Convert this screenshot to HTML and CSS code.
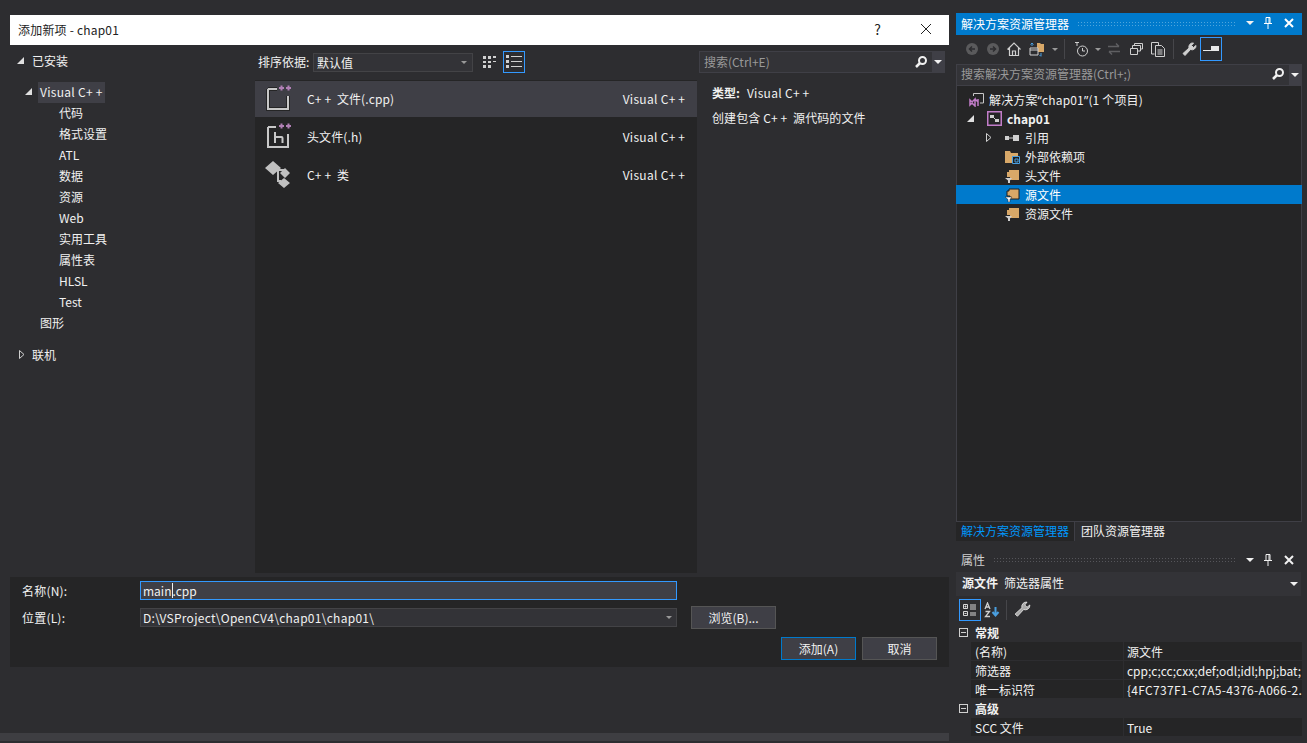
FILE: index.html
```html
<!DOCTYPE html>
<html lang="zh-CN">
<head>
    <meta charset="UTF-8">
    <title>添加新项 - chap01</title>
    <link rel="stylesheet" href="styles.css">
</head>
<body>
<div class="app">
    <div class="workspace">
        <div class="dialog">
            <div class="dialog-title">
                <span class="dialog-name">添加新项 - chap01</span>
                <span class="dialog-help">?</span>
                <svg class="dialog-close" width="12" height="12" viewBox="0 0 12 12"><path d="M1 1l10 10M11 1L1 11" stroke="#222" fill="none"/></svg>
            </div>
            <div class="dialog-body">
                <div class="cats">
                    <div class="cat cat-top"><i class="tri tri-a"></i>已安装</div>
                    <div class="cat cat-gap"><i class="tri tri-b"></i><span class="cat-sel">Visual C<span class="pp">++</span></span></div>
                    <div class="cat cat-sub">代码</div>
                    <div class="cat cat-sub">格式设置</div>
                    <div class="cat cat-sub">ATL</div>
                    <div class="cat cat-sub">数据</div>
                    <div class="cat cat-sub">资源</div>
                    <div class="cat cat-sub">Web</div>
                    <div class="cat cat-sub">实用工具</div>
                    <div class="cat cat-sub">属性表</div>
                    <div class="cat cat-sub">HLSL</div>
                    <div class="cat cat-sub">Test</div>
                    <div class="cat cat-mid">图形</div>
                    <div class="cat cat-top cat-online">
                        <svg class="tri-open" width="6" height="9" viewBox="0 0 6 9"><path d="M.5.5v8L5 4.500z" fill="none" stroke="#d0d0d0"/></svg>联机
                    </div>
                </div>
                <div class="center">
                    <div class="sortbar">
                        <span class="sort-label">排序依据:</span>
                        <div class="sort-select">默认值<i class="caret"></i></div>
                        <svg class="view-icon" width="14" height="14" viewBox="0 0 14 14" fill="#d0d0d0"><path d="M0 1h3v3H0zM5 1h3v3H5zM10 1h3v2h-3zM0 6h3v2H0zM5 6h3v2H5zM10 6h3v1h-3zM0 10h3v3H0zM5 10h3v3H5z"/></svg>
                        <div class="view-active">
                            <svg width="16" height="14" viewBox="0 0 16 14" fill="#d0d0d0"><path d="M0 0h3v3H0zM0 5h3v3H0zM0 10h3v3H0zM5 1h11v1H5zM5 6h11v1H5zM5 11h11v1H5z"/></svg>
                        </div>
                    </div>
                    <div class="templates">
                        <div class="tpl tpl-sel">
                            <svg class="tpl-icon" width="28" height="30" viewBox="0 0 28 30"><path d="M3 6h9M3 6v20h20V13" fill="none" stroke="#252526" stroke-width="4"/><path d="M3 6h9M3 6v20h20V13" fill="none" stroke="#c8c8c8" stroke-width="2"/><path d="M14 5h5M16.500 2.500v5M21 5h5M23.500 2.500v5" stroke="#b180b5" stroke-width="2"/></svg>
                            <span class="tpl-name">C<span class="pp">++</span> 文件(.cpp)</span><span class="tpl-lang">Visual C<span class="pp">++</span></span>
                        </div>
                        <div class="tpl">
                            <svg class="tpl-icon" width="28" height="30" viewBox="0 0 28 30"><path d="M3 6h8M3 6v20h20V13" fill="none" stroke="#c8c8c8" stroke-width="2"/><path d="M10 11v11M10 16h6.500a1 1 0 0 1 1 1v5" fill="none" stroke="#c8c8c8" stroke-width="2"/><path d="M14 5h5M16.500 2.500v5M21 5h5M23.500 2.500v5" stroke="#b180b5" stroke-width="2"/></svg>
                            <span class="tpl-name">头文件(.h)</span><span class="tpl-lang">Visual C<span class="pp">++</span></span>
                        </div>
                        <div class="tpl">
                            <svg class="tpl-icon" width="28" height="30" viewBox="0 0 28 30" fill="#c0c0c0"><path d="M8 2l8 7-8 7-8-7zM20 9l5 5-5 5-5-5zM19 19l6 5-6 5-6-5z"/><path d="M12 11h7M13 11v11h3" fill="none" stroke="#c0c0c0" stroke-width="2"/></svg>
                            <span class="tpl-name">C<span class="pp">++</span> 类</span><span class="tpl-lang">Visual C<span class="pp">++</span></span>
                        </div>
                    </div>
                </div>
                <div class="info">
                    <div class="search info-search">
                        <span class="search-text">搜索(Ctrl+E)</span>
                        <svg class="search-icon" width="14" height="14" viewBox="0 0 14 14"><circle cx="8.500" cy="5.500" r="3.500" fill="none" stroke="#f1f1f1" stroke-width="2"/><path d="M6 8l-4 4" stroke="#f1f1f1" stroke-width="2.500"/></svg>
                        <span class="search-drop"><i class="caret caret-light"></i></span>
                    </div>
                    <div class="info-type"><b>类型:</b><span class="info-lang">Visual C<span class="pp">++</span></span></div>
                    <div class="info-desc">创建包含 C<span class="pp">++</span> 源代码的文件</div>
                </div>
            </div>
            <div class="dialog-foot">
                <div class="form-row">
                    <span class="form-label">名称(N):</span>
                    <div class="field field-focus">main<i class="cursor"></i>.cpp</div>
                </div>
                <div class="form-row form-row-loc">
                    <span class="form-label">位置(L):</span>
                    <div class="field field-loc">D:\VSProject\OpenCV4\chap01\chap01\<i class="caret"></i></div>
                    <button class="btn btn-browse">浏览(B)...</button>
                </div>
                <div class="form-actions">
                    <button class="btn btn-primary">添加(A)</button>
                    <button class="btn">取消</button>
                </div>
            </div>
        </div>
        <div class="hscroll"></div>
    </div>

    <div class="side">
        <div class="pane-title pane-title-on">
            <span>解决方案资源管理器</span>
            <span class="grip"></span>
            <i class="caret caret-light"></i>
            <svg class="pin" width="10" height="12" viewBox="0 0 10 12" fill="none" stroke="#fff"><path d="M3 .5h4v6H3zM1 6.500h8M5 7v5M6 1v5" /></svg>
            <svg class="close" width="10" height="10" viewBox="0 0 10 10"><path d="M1 1l8 8M9 1L1 9" stroke="#fff" stroke-width="2"/></svg>
        </div>
        <div class="explorer-tools">
            <span class="tool"><svg width="14" height="14" viewBox="0 0 14 14"><circle cx="7" cy="7" r="6" fill="#5a5a5c"/><path d="M10 7H5M7 4.500L4.500 7 7 9.500" stroke="#2d2d30" stroke-width="1.500" fill="none"/></svg></span>
            <span class="tool"><svg width="14" height="14" viewBox="0 0 14 14"><circle cx="7" cy="7" r="6" fill="#5a5a5c"/><path d="M4 7h5M7 4.500L9.500 7 7 9.500" stroke="#2d2d30" stroke-width="1.500" fill="none"/></svg></span>
            <span class="tool tool-wide"><svg width="14" height="14" viewBox="0 0 14 14" fill="none" stroke="#d0d0d0" stroke-width="1.200"><path d="M.5 7.500L7 1l6.500 6.500M2.500 6v7.500h9V6M5.500 13.500V9h3v4.500"/></svg></span>
            <span class="tool tool-sync"><svg width="16" height="15" viewBox="0 0 16 15"><path d="M8 1h3l1 1h3v8H8z" fill="#d8a868"/><path d="M1 6h8v7H1zM1 8h8" fill="#2d2d30" stroke="#d0d0d0"/><path d="M3 4V1M1.500 2.500L3 1l1.500 1.500M12 11v3M10.500 13l1.500 1.500" stroke="#4a9fe0" fill="none"/></svg></span>
            <span class="tool tool-caret"><i class="caret"></i></span>
            <span class="tool-sep"></span>
            <span class="tool tool-hist"><svg width="16" height="16" viewBox="0 0 16 16" fill="none" stroke="#d0d0d0"><circle cx="9.500" cy="10" r="5"/><path d="M9.500 7v3h2.500M2 1.500h4M4 2v3" /></svg></span>
            <span class="tool tool-smallcaret"><i class="caret"></i></span>
            <span class="tool tool-wide"><svg width="14" height="14" viewBox="0 0 14 14" fill="none" stroke="#5f5f62" stroke-width="1.500"><path d="M1 4.500h11M9 1.500l3 3M13 9.500H2M5 12.500l-3-3"/></svg></span>
            <span class="tool tool-wide"><svg width="14" height="14" viewBox="0 0 14 14" fill="none" stroke="#d0d0d0"><path d="M1.500 6.500h7v6h-7zM3.500 6V3.500h8V9H9M5.500 3V1.500h8V7H12"/></svg></span>
            <span class="tool tool-wide"><svg width="14" height="16" viewBox="0 0 14 16" fill="none" stroke="#d0d0d0"><path d="M3.500 13H.5V1.500h7V4M4.500 4.500h6l3 3v8h-9zM6.500 9h5M6.500 11h5M6.500 13h5"/></svg></span>
            <span class="tool-sep tool-sep-b"></span>
            <span class="tool"><svg width="15" height="15" viewBox="0 0 15 15"><path d="M14 3.500a4 4 0 0 1-5.500 4L3 13.500 1 11.500l6-5.500a4 4 0 0 1 4.500-5L9.500 3.500 11.500 5.500z" fill="#d0d0d0" stroke="#d0d0d0"/></svg></span>
            <span class="tool tool-active"><svg width="16" height="6" viewBox="0 0 16 6"><path d="M0 4h16v1H0zM8 0h8v4H8z" fill="#e8e8e8"/></svg></span>
        </div>
        <div class="search side-search">
            <span class="search-text">搜索解决方案资源管理器(Ctrl+;)</span>
            <svg class="search-icon" width="14" height="14" viewBox="0 0 14 14"><circle cx="8.500" cy="5.500" r="3.500" fill="none" stroke="#f1f1f1" stroke-width="2"/><path d="M6 8l-4 4" stroke="#f1f1f1" stroke-width="2.500"/></svg>
            <span class="search-drop"><i class="caret caret-light"></i></span>
        </div>
        <div class="explorer-tree">
            <div class="node node-0">
                <svg class="node-icon" width="16" height="14" viewBox="0 0 16 14"><path d="M4.500 3V.5h10V10H11" fill="none" stroke="#c8c8c8"/><path d="M1 7l2 2 3-3v7L3 10l-2 2zM6 6l3 3V6v7" fill="none" stroke="#c27dc9" stroke-width="1.500"/></svg>
                <span class="solution-name">解决方案<span class="quote">“</span>chap01<span class="quote">”</span>(1 个项目)</span>
            </div>
            <div class="node node-1 node-bold">
                <i class="tri tri-node"></i>
                <svg class="node-icon" width="15" height="15" viewBox="0 0 15 15"><path d="M.75.75h13.500v13.500H.75z" fill="none" stroke="#c27dc9" stroke-width="1.500"/><path d="M3 4h4v3H3zM8 8h4v3H8z" fill="#d0d0d0"/><path d="M6 6l3 3" stroke="#d0d0d0"/></svg>
                chap01
            </div>
            <div class="node node-2">
                <svg class="tri-open" width="6" height="9" viewBox="0 0 6 9"><path d="M.5.5v8L5 4.500z" fill="none" stroke="#d0d0d0"/></svg>
                <svg class="node-icon" width="15" height="8" viewBox="0 0 15 8" fill="#d0d0d0"><path d="M0 2h4v4H0zM4 3.500h4v1H4zM8 1h6v6H8z"/></svg>
                引用
            </div>
            <div class="node node-3">
                <svg class="node-icon" width="15" height="14" viewBox="0 0 15 14"><path d="M0 1h5l1 2h7v5H7v5H0z" fill="#d8a868"/><path d="M7.500 6.500h7v7h-7z" fill="#1e1e1e" stroke="#4a9fe0"/><path d="M10 9h3v3h-3z" fill="none" stroke="#4a9fe0"/></svg>
                外部依赖项
            </div>
            <div class="node node-3">
                <svg class="node-icon" width="15" height="14" viewBox="0 0 15 14"><path d="M2 3h2V1h10v10H5V8H2z" fill="#d8a868"/><path d="M0 9h7L5 11.500V14H3v-2.500z" fill="#d0d0d0"/></svg>
                头文件
            </div>
            <div class="node node-3 node-sel">
                <svg class="node-icon" width="15" height="14" viewBox="0 0 15 14"><path d="M2 3h2V1h10v10H5V8H2z" fill="#d8a868" stroke="#1e1e1e"/><path d="M0 9h7L5 11.500V14H3v-2.500z" fill="#fff" stroke="#1e1e1e" stroke-width=".5"/></svg>
                源文件
            </div>
            <div class="node node-3">
                <svg class="node-icon" width="15" height="14" viewBox="0 0 15 14"><path d="M2 3h2V1h10v10H5V8H2z" fill="#d8a868"/><path d="M0 9h7L5 11.500V14H3v-2.500z" fill="#d0d0d0"/></svg>
                资源文件
            </div>
        </div>
        <div class="side-tabs">
            <span class="side-tab side-tab-on">解决方案资源管理器</span>
            <span class="side-tab side-tab-off">团队资源管理器</span>
        </div>
        <div class="pane-title props-title">
            <span>属性</span>
            <span class="grip grip-dim"></span>
            <i class="caret caret-light"></i>
            <svg class="pin" width="10" height="12" viewBox="0 0 10 12" fill="none" stroke="#f1f1f1"><path d="M3 .5h4v6H3zM1 6.500h8M5 7v5M6 1v5" /></svg>
            <svg class="close" width="10" height="10" viewBox="0 0 10 10"><path d="M1 1l8 8M9 1L1 9" stroke="#f1f1f1" stroke-width="2"/></svg>
        </div>
        <div class="props-object"><b>源文件</b><span>筛选器属性</span><i class="caret caret-light"></i></div>
        <div class="props-tools">
            <span class="tool tool-active">
                <svg width="14" height="14" viewBox="0 0 14 14" fill="none" stroke="#d8d8d8"><path d="M.5 1.500h4v4h-4zM.5 8.500h4v4h-4zM2.500 2.500v2M1.500 3.500h2M1.500 10.500h2M7 2h6M7 4h6M7 6h6M7 10h6M7 12h6"/></svg>
            </span>
            <span class="tool"><svg width="16" height="16" viewBox="0 0 16 16"><path d="M1 7l2.500-6L6 7M2 5h3M1.500 9.500h4l-4 5h4.500" fill="none" stroke="#d0d0d0" stroke-width="1.300"/><path d="M11.500 5v8M8.500 10l3 3.500 3-3.500" fill="none" stroke="#4a9fe0" stroke-width="2"/></svg></span>
            <span class="tool-sep tool-sep-c"></span>
            <span class="tool"><svg width="17" height="17" viewBox="0 0 15 15"><path d="M14 3.500a4 4 0 0 1-5.500 4L3 13.500 1 11.500l6-5.500a4 4 0 0 1 4.500-5L9.500 3.500 11.500 5.500z" fill="#a8a8a8" stroke="#eee" stroke-width=".7"/></svg></span>
        </div>
        <div class="props-grid">
            <div class="prop-group"><i class="box-minus"></i><b>常规</b></div>
            <div class="prop"><span class="prop-key">(名称)</span><span class="prop-val">源文件</span></div>
            <div class="prop"><span class="prop-key">筛选器</span><span class="prop-val">cpp;c;cc;cxx;def;odl;idl;hpj;bat;</span></div>
            <div class="prop"><span class="prop-key">唯一标识符</span><span class="prop-val prop-val-id">{4FC737F1-C7A5-4376-A066-2.</span></div>
            <div class="prop-group"><i class="box-minus"></i><b>高级</b></div>
            <div class="prop"><span class="prop-key">SCC 文件</span><span class="prop-val">True</span></div>
        </div>
    </div>
</div>
</body>
</html>
```

FILE: styles.css
```css
html,
body {
    margin: 0;
    padding: 0;
    height: 100%;
    overflow: hidden;
    background-color: #2d2d30;
    color: #f1f1f1;
    font-family: "Noto Sans CJK SC", "Noto Sans", sans-serif;
    font-size: 12px;
    line-height: 19px;
}

.app {
    display: flex;
    width: 1307px;
    height: 743px;
}

i {
    display: block;
    font-style: normal;
}

b {
    font-weight: 700;
}

/* the plus signs of C++ sit wider apart in the original font */
.pp {
    letter-spacing: 3px;
}

.quote {
    font-family: "Noto Sans", sans-serif;
}

/* left side, the dialog and the scrollbar under it */
.workspace {
    width: 956px;
    flex: none;
}

.dialog {
    width: 939px;
    height: 652px;
    margin: 15px 0 0 10px;
    display: flex;
    flex-direction: column;
}

.dialog-title {
    height: 30px;
    flex: none;
    box-sizing: border-box;
    background-color: #fff;
    color: #222;
    display: flex;
    align-items: center;
    padding: 0 0 2px 8px;
}

.dialog-name {
    flex: 1;
    letter-spacing: .2px;
}

.dialog-help {
    font-size: 14px;
    margin-right: 39px;
}

.dialog-close {
    margin-right: 17px;
}

.dialog-body {
    height: 532px;
    flex: none;
    display: flex;
}

/* category tree */
.cats {
    width: 245px;
    flex: none;
    padding-top: 6px;
}

.cat {
    height: 21px;
    box-sizing: border-box;
    padding-bottom: 2px;
    line-height: 19px;
    display: flex;
    align-items: center;
}

.cat-top {
    padding-left: 22px;
}

.cat-gap {
    margin-top: 10px;
    padding-left: 28px;
}

.cat-sel {
    height: 21px;
    margin-bottom: -2px;
    background-color: #3f3f46;
    padding-left: 2px;
    letter-spacing: .3px;
}

.cat-sub {
    padding-left: 49px;
}

.cat-mid {
    padding-left: 30px;
}

.cat-online {
    margin-top: 11px;
}

.tri {
    width: 0;
    height: 0;
    border-style: solid;
    border-width: 0 0 7px 7px;
    border-color: transparent transparent #e0e0e0 transparent;
    flex: none;
}

.tri-a {
    margin: 0 8px 0 -15px;
}

.tri-b {
    margin: 0 6px 0 -13px;
}

.tri-open {
    flex: none;
}

.cat-online .tri-open {
    margin: 0 7px 0 -13px;
}

/* middle column */
.center {
    width: 442px;
    flex: none;
}

.sortbar {
    height: 35px;
    display: flex;
    align-items: flex-start;
    padding: 6px 0 0 3px;
    box-sizing: border-box;
}

.sort-label {
    width: 55px;
    line-height: 22px;
}

.sort-select {
    width: 160px;
    height: 19px;
    margin-top: 2px;
    box-sizing: border-box;
    background-color: #333337;
    border: 1px solid #434346;
    padding-left: 3px;
    line-height: 17px;
    display: flex;
    justify-content: space-between;
    align-items: center;
    padding-right: 5px;
}

.view-icon {
    margin: 4px 0 0 10px;
}

.view-active {
    width: 22px;
    height: 22px;
    box-sizing: border-box;
    margin-left: 6px;
    border: 1px solid #3399ff;
    display: flex;
    align-items: center;
    justify-content: center;
}

.templates {
    height: 493px;
    background-color: #252526;
    padding-top: 1px;
    box-sizing: border-box;
}

.tpl {
    height: 38px;
    display: flex;
    align-items: center;
    padding: 0 12px 0 10px;
}

.tpl-sel {
    height: 36px;
    box-sizing: border-box;
    padding-bottom: 2px;
    background-color: #3f3f46;
}

.tpl-icon {
    flex: none;
    margin-right: 14px;
}

.tpl-name {
    flex: 1;
    letter-spacing: .1px;
}

.tpl-lang {
    letter-spacing: .3px;
    margin-right: -3px;
}

/* right column of the dialog */
.info {
    width: 252px;
    flex: none;
    padding: 6px 4px 0 2px;
    box-sizing: border-box;
}

.search {
    display: flex;
    align-items: center;
    box-sizing: border-box;
    background-color: #333337;
    border: 1px solid #3f3f46;
}

.search-text {
    flex: 1;
    color: #999;
    padding: 0 0 2px 4px;
    white-space: nowrap;
}

.search-icon {
    margin-right: 4px;
}

.search-drop {
    width: 12px;
    align-self: stretch;
    background-color: #3f3f46;
    display: flex;
    align-items: center;
    justify-content: center;
}

.info-search {
    height: 22px;
}

.info-type {
    margin: 10px 0 0 13px;
}

.info-type b {
    margin-right: 7px;
}

.info-lang {
    letter-spacing: .3px;
}

.info-desc {
    margin: 6px 0 0 13px;
    letter-spacing: .1px;
}

/* footer */
.dialog-foot {
    flex: 1;
    background-color: #252526;
    padding-top: 4px;
}

.form-row {
    display: flex;
    align-items: center;
    padding-left: 12px;
}

.form-row-loc {
    margin-top: 6px;
    height: 23px;
}

.form-label {
    width: 118px;
    flex: none;
    letter-spacing: .2px;
}

.field {
    width: 537px;
    height: 19px;
    box-sizing: border-box;
    background-color: #333337;
    border: 1px solid #434346;
    padding-left: 2px;
    line-height: 17px;
    display: flex;
    align-items: center;
    position: relative;
}

.field-focus {
    background-color: #3f3f46;
    border-color: #3399ff;
}

.field-loc {
    letter-spacing: .28px;
}

.field-loc .caret {
    position: absolute;
    right: 4px;
    top: 7px;
}

.cursor {
    width: 1px;
    height: 15px;
    background-color: #f1f1f1;
}

.btn {
    height: 23px;
    box-sizing: border-box;
    background-color: #3f3f46;
    border: 1px solid #555;
    color: #f1f1f1;
    font: inherit;
    line-height: 20px;
    padding: 0;
}

.btn-browse {
    width: 85px;
    margin-left: 14px;
}

.form-actions {
    display: flex;
    justify-content: flex-end;
    gap: 6px;
    padding: 8px 12px 0 0;
}

.form-actions .btn {
    width: 75px;
}

.btn-primary {
    border-color: #007acc;
}

.hscroll {
    height: 8px;
    margin-top: 66px;
    width: 949px;
    background-color: #3e3e42;
}

/* right side panels */
.side {
    width: 346px;
    flex: none;
    padding-top: 13px;
}

.pane-title {
    display: flex;
    align-items: center;
    height: 22px;
    box-sizing: border-box;
    padding: 0 8px 2px 5px;
}

.pane-title-on {
    background-color: #007acc;
    color: #fff;
}

.grip {
    flex: 1;
    height: 5px;
    margin: 0 10px 0 8px;
    background-image: radial-gradient(#4ea5dd 40%, transparent 45%);
    background-size: 3px 3px;
}

.grip-dim {
    background-image: radial-gradient(#55555a 40%, transparent 45%);
}

.pin {
    margin: 0 11px 0 9px;
}

.caret {
    width: 0;
    height: 0;
    border-style: solid;
    border-width: 3px 3px 0 3px;
    border-color: #999 transparent transparent transparent;
    flex: none;
}

.caret-light {
    border-color: #f1f1f1 transparent transparent transparent;
    border-width: 4px 4px 0 4px;
}

.explorer-tools {
    height: 29px;
    display: flex;
    align-items: center;
    padding: 0 0 1px 5px;
    box-sizing: border-box;
}

.tool {
    width: 21px;
    height: 24px;
    flex: none;
    box-sizing: border-box;
    display: flex;
    align-items: center;
    justify-content: center;
}

.tool-wide {
    width: 22px;
}

.tool-sync,
.tool-hist {
    width: 24px;
}

.tool-caret {
    width: 12px;
}

.tool-smallcaret {
    width: 10px;
}

.tool-active {
    width: 22px;
    border: 1px solid #3399ff;
}

.tool-sep {
    width: 1px;
    height: 20px;
    background-color: #46464a;
    margin: 0 4px 0 3px;
    flex: none;
}

.tool-sep-b,
.tool-sep-c {
    margin: 0 5px 0 4px;
}

.side-search {
    height: 22px;
}

.side-search .search-text {
    padding-bottom: 4px;
}

.side-search .search-icon {
    margin-bottom: 2px;
}

.explorer-tree {
    height: 436px;
    box-sizing: border-box;
    background-color: #252526;
    border: 1px solid #3f3f46;
    border-top: 0;
    padding-top: 4px;
}

.node {
    height: 19px;
    display: flex;
    align-items: center;
    white-space: nowrap;
}

.node-0 {
    padding-left: 12px;
}

.solution-name {
    letter-spacing: .15px;
}

.node-bold {
    font-weight: 700;
    padding-left: 10px;
}

.node-2 {
    padding-left: 29px;
}

.node-3 {
    padding-left: 48px;
}

.node-icon {
    flex: none;
    margin-right: 5px;
}

.node-0 .node-icon {
    margin-right: 4px;
}

.tri-node {
    margin-right: 13px;
}

.node-2 .tri-open {
    margin-right: 13px;
}

.node-sel {
    background-color: #007acc;
    color: #fff;
    margin: 0 -1px;
    padding-left: 49px;
}

.side-tabs {
    height: 19px;
    display: flex;
}

.side-tab {
    padding: 0 5px 2px;
    line-height: 17px;
}

.side-tab-on {
    width: 108px;
    background-color: #252526;
    color: #0097fb;
}

.side-tab-off {
    padding-left: 6px;
    border-left: 1px solid #3f3f46;
}

.props-title {
    margin-top: 8px;
    height: 23px;
    color: #d0d0d0;
}

.props-object {
    height: 24px;
    box-sizing: border-box;
    background-color: #333337;
    display: flex;
    align-items: center;
    padding: 0 3px 4px 6px;
    margin-right: 1px;
}

.props-object span {
    flex: 1;
    margin-left: 6px;
}

.props-object .caret {
    margin-top: 4px;
}

.props-tools {
    height: 27px;
    display: flex;
    align-items: center;
    padding-left: 3px;
    box-sizing: border-box;
}

.props-tools .tool {
    height: 22px;
}

.prop-group {
    height: 19px;
    box-sizing: border-box;
    display: flex;
    align-items: center;
    padding: 0 0 1px 3px;
}

.box-minus {
    width: 7px;
    height: 7px;
    border: 1px solid #d0d0d0;
    margin-right: 7px;
    background: linear-gradient(#d0d0d0, #d0d0d0) center / 5px 1px no-repeat;
}

.prop {
    height: 18px;
    margin-bottom: 1px;
    display: flex;
    margin-left: 15px;
}

.prop-key {
    width: 152px;
    padding-left: 4px;
    box-sizing: border-box;
    background-color: #252526;
    flex: none;
    line-height: 20px;
    margin-right: 1px;
}

.prop-val {
    flex: 1;
    background-color: #252526;
    padding-left: 3px;
    line-height: 20px;
    white-space: nowrap;
}

.prop-val-id {
    letter-spacing: .3px;
}
```
